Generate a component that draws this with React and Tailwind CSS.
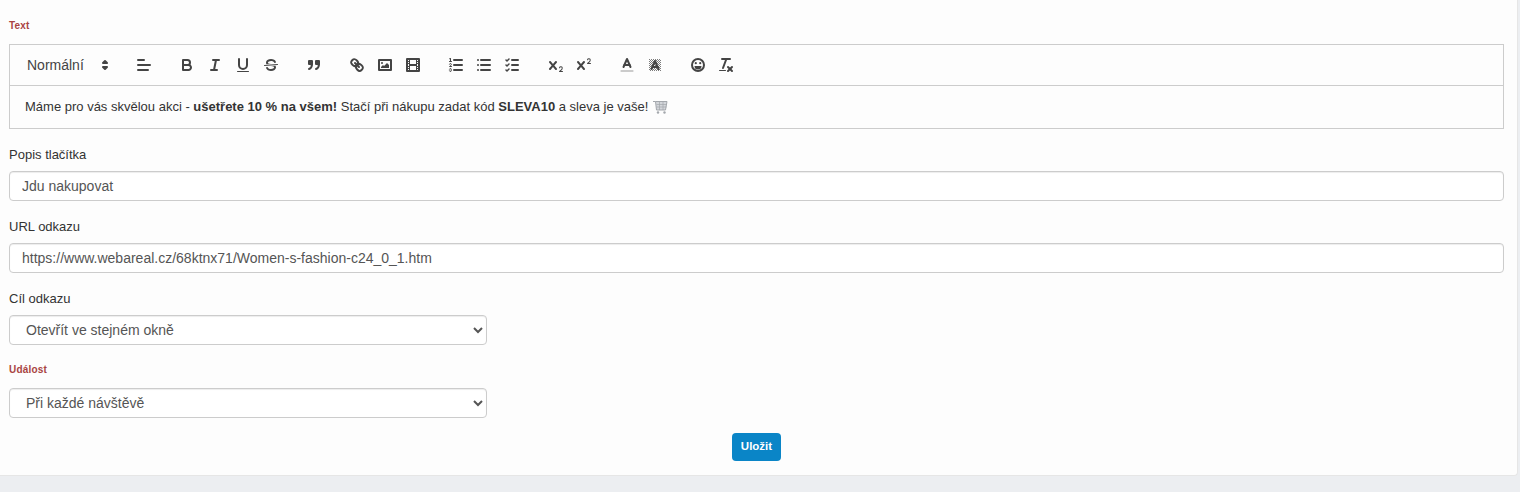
const stroke = { fill: 'none', stroke: '#444', strokeWidth: 2, strokeLinecap: 'round', strokeLinejoin: 'round' };
const thin = { ...stroke, strokeWidth: 1 };
const solid = { fill: '#444' };
const xPath = 'M9.65,5.241a1,1,0,0,0-1.409.108L6,7.964,3.759,5.349A1,1,0,0,0,2.192,6.59178Q2.2,6.6,2.241,6.651L4.684,9.5,2.241,12.35A1,1,0,0,0,3.71,13.70722q0.02-.02.049-0.049L6,11.036,8.241,13.65a1,1,0,1,0,1.567-1.24277Q9.8,12.4,9.759,12.35L7.316,9.5,9.759,6.651A1,1,0,0,0,9.65,5.241Z';

const icons = {
  align: <><line {...stroke} x1="3" x2="15" y1="9" y2="9" /><line {...stroke} x1="3" x2="13" y1="14" y2="14" /><line {...stroke} x1="3" x2="9" y1="4" y2="4" /></>,
  bold: <><path {...stroke} d="M5,4H9.5A2.5,2.5,0,0,1,12,6.5v0A2.5,2.5,0,0,1,9.5,9H5V4Z" /><path {...stroke} d="M5,9h5.5A2.5,2.5,0,0,1,13,11.5v0A2.5,2.5,0,0,1,10.5,14H5V9Z" /></>,
  italic: <><line {...stroke} x1="7" x2="13" y1="4" y2="4" /><line {...stroke} x1="5" x2="11" y1="14" y2="14" /><line {...stroke} x1="8" x2="10" y1="14" y2="4" /></>,
  underline: <><path {...stroke} d="M5,3V9a4.012,4.012,0,0,0,4,4H9a4.012,4.012,0,0,0,4-4V3" /><rect {...solid} height="1" rx="0.5" width="12" x="3" y="15" /></>,
  strike: <><line {...thin} x1="15.5" x2="2.5" y1="8.5" y2="9.5" /><path {...solid} d="M9.007,8C6.542,7.791,6,7.519,6,6.5,6,5.792,7.283,5,9,5c1.571,0,2.765.679,2.969,1.309a1,1,0,0,0,1.9-.617C13.356,4.106,11.354,3,9,3,6.2,3,4,4.538,4,6.5a3.2,3.2,0,0,0,.5,1.843Z" /><path {...solid} d="M8.984,10C11.457,10.208,12,10.479,12,11.5c0,.708-1.283,1.5-3,1.5-1.571,0-2.765-.679-2.969-1.309a1,1,0,1,0-1.9.617C4.644,13.894,6.646,15,9,15c2.8,0,5-1.538,5-3.5a3.2,3.2,0,0,0-.5-1.843Z" /></>,
  quote: <><rect {...stroke} fill="#444" height="3" width="3" x="4" y="5" /><rect {...stroke} fill="#444" height="3" width="3" x="11" y="5" /><path {...stroke} d="M7,8c0,4.031-3,5-3,5" /><path {...stroke} d="M14,8c0,4.031-3,5-3,5" /></>,
  link: <><line {...stroke} x1="7" x2="11" y1="7" y2="11" /><path {...stroke} d="M8.9,4.577a3.476,3.476,0,0,1,.36,4.679A3.476,3.476,0,0,1,4.577,8.9C3.185,7.5,2.035,6.4,4.217,4.217S7.5,3.185,8.9,4.577Z" /><path {...stroke} d="M13.423,9.1a3.476,3.476,0,0,0-4.679-.36,3.476,3.476,0,0,0,.36,4.679c1.392,1.392,2.5,2.542,4.679.36S14.815,10.5,13.423,9.1Z" /></>,
  image: <><rect {...stroke} height="10" width="12" x="3" y="4" /><circle {...solid} cx="6" cy="7" r="1" /><polyline {...solid} points="5 12 5 11 7 9 8 10 11 7 13 9 13 12 5 12" /></>,
  video: <><rect {...stroke} height="12" width="12" x="3" y="3" /><rect {...solid} height="12" width="1" x="5" y="3" /><rect {...solid} height="12" width="1" x="12" y="3" /><rect {...solid} height="2" width="8" x="5" y="8" /><rect {...solid} height="1" width="3" x="3" y="5" /><rect {...solid} height="1" width="3" x="3" y="7" /><rect {...solid} height="1" width="3" x="3" y="10" /><rect {...solid} height="1" width="3" x="3" y="12" /><rect {...solid} height="1" width="3" x="12" y="5" /><rect {...solid} height="1" width="3" x="12" y="7" /><rect {...solid} height="1" width="3" x="12" y="10" /><rect {...solid} height="1" width="3" x="12" y="12" /></>,
  ordered: <><line {...stroke} x1="7" x2="15" y1="4" y2="4" /><line {...stroke} x1="7" x2="15" y1="9" y2="9" /><line {...stroke} x1="7" x2="15" y1="14" y2="14" /><line {...thin} x1="2.5" x2="4.5" y1="5.5" y2="5.5" /><path {...solid} d="M3.5,6A0.5,0.5,0,0,1,3,5.5V3.085l-0.276.138A0.5,0.5,0,0,1,2.053,3c-0.124-.247-0.023-0.324.224-0.447l1-.5A0.5,0.5,0,0,1,4,2.5v3A0.5,0.5,0,0,1,3.5,6Z" /><path {...thin} d="M4.5,10.5h-2c0-.234,1.85-1.076,1.85-2.234A0.959,0.959,0,0,0,2.5,8.156" /><path {...thin} d="M2.5,14.846a0.959,0.959,0,0,0,1.85-.109A0.7,0.7,0,0,0,3.75,14a0.688,0.688,0,0,0,.6-0.736,0.959,0.959,0,0,0-1.85-.109" /></>,
  bullet: <><line {...stroke} x1="6" x2="15" y1="4" y2="4" /><line {...stroke} x1="6" x2="15" y1="9" y2="9" /><line {...stroke} x1="6" x2="15" y1="14" y2="14" /><line {...stroke} x1="3" x2="3" y1="4" y2="4" /><line {...stroke} x1="3" x2="3" y1="9" y2="9" /><line {...stroke} x1="3" x2="3" y1="14" y2="14" /></>,
  check: <><line {...stroke} x1="9" x2="15" y1="4" y2="4" /><polyline {...stroke} strokeWidth="1.5" points="3 4 4 5 6 3" /><line {...stroke} x1="9" x2="15" y1="14" y2="14" /><polyline {...stroke} strokeWidth="1.5" points="3 14 4 15 6 13" /><line {...stroke} x1="9" x2="15" y1="9" y2="9" /><polyline {...stroke} strokeWidth="1.5" points="3 9 4 10 6 8" /></>,
  sub: <><path {...solid} d="M15.5,15H13.861a3.858,3.858,0,0,0,1.914-2.975,1.8,1.8,0,0,0-1.6-1.751A1.921,1.921,0,0,0,12.021,11.7a0.50013,0.50013,0,1,0,.957.291h0a0.914,0.914,0,0,1,1.053-.725,0.81,0.81,0,0,1,.744.762c0,1.076-1.16971,1.86982-1.93971,2.43082A1.45639,1.45639,0,0,0,12,15.5a0.5,0.5,0,0,0,.5.5h3A0.5,0.5,0,0,0,15.5,15Z" /><path {...solid} d={xPath} /></>,
  sup: <><path {...solid} d="M15.5,7H13.861a4.015,4.015,0,0,0,1.914-2.975,1.8,1.8,0,0,0-1.6-1.751A1.922,1.922,0,0,0,12.021,3.7a0.5,0.5,0,1,0,.957.291,0.917,0.917,0,0,1,1.053-.725,0.81,0.81,0,0,1,.744.762c0,1.077-1.164,1.925-1.934,2.486A1.423,1.423,0,0,0,12,7.5a0.5,0.5,0,0,0,.5.5h3A0.5,0.5,0,0,0,15.5,7Z" /><path {...solid} d={xPath} /></>,
  color: <><line {...stroke} stroke="#999" strokeWidth="1" x1="3" x2="15" y1="15" y2="15" /><polyline {...stroke} points="5.5 11 9 3 12.5 11" /><line {...stroke} x1="11.63" x2="6.38" y1="9" y2="9" /></>,
  background: <><defs><pattern id="hatch" width="2" height="2" patternUnits="userSpaceOnUse"><rect width="1" height="1" fill="#444" /><rect x="1" y="1" width="1" height="1" fill="#444" /></pattern></defs><rect fill="url(#hatch)" x="3" y="3" width="12" height="12" opacity="0.7" /><polyline {...stroke} points="5.5 13 9 5 12.5 13" /><line {...stroke} x1="11.63" x2="6.38" y1="11" y2="11" /></>,
  emoji: <><circle {...stroke} cx="9" cy="9" r="6" /><circle {...solid} cx="6.8" cy="7.2" r="1.1" /><circle {...solid} cx="11.2" cy="7.2" r="1.1" /><path {...solid} d="M5.5,10h7a3.5,3.5,0,0,1-7,0Z" /></>,
  clean: <><line {...stroke} x1="5" x2="13" y1="3" y2="3" /><line {...stroke} x1="6" x2="9.35" y1="12" y2="3" /><line {...stroke} x1="11" x2="15" y1="11" y2="15" /><line {...stroke} x1="15" x2="11" y1="11" y2="15" /><rect {...solid} height="1" rx="0.5" width="7" x="2" y="14" /></>,
};

function ToolButton({ name }) {
  return (
    <span className="w-7 h-6 flex items-center justify-center shrink-0">
      <svg viewBox="0 0 18 18" className="w-[18px] h-[18px]">{icons[name]}</svg>
    </span>
  );
}

const groups = [
  ['align'],
  ['bold', 'italic', 'underline', 'strike'],
  ['quote'],
  ['link', 'image', 'video'],
  ['ordered', 'bullet', 'check'],
  ['sub', 'sup'],
  ['color', 'background'],
  ['emoji', 'clean'],
];

function FieldLabel({ children }) {
  return <label className="block text-[13px] leading-[18px] text-[#333]">{children}</label>;
}

function RedLabel({ children }) {
  return <div className="text-[10px] leading-[12px] font-bold tracking-[0.2px] text-[#a94442]">{children}</div>;
}

const inputClass = 'block w-full h-[30px] px-3 rounded border border-[#ccc] bg-white text-[14px] text-[#555] shadow-[inset_0_1px_1px_rgba(0,0,0,0.075)] outline-none';
const selectClass = 'block w-[478px] h-[30px] px-3 rounded border border-[#ccc] bg-white text-[14px] text-[#555] shadow-[inset_0_1px_1px_rgba(0,0,0,0.075)] outline-none';

export default function App() {
  return (
    <div className="h-[492px] bg-[#eceef1] overflow-hidden font-['Liberation_Sans',Arial,sans-serif]">
      <div className="w-[1518px] h-[476px] bg-[#fdfdfd] border-r border-b border-[#e6e6e6] rounded-br pl-[9px] pr-[13px] pt-[20px]">
        <RedLabel>Text</RedLabel>
        <div className="mt-[12px] border border-[#ccc]">
          <div className="flex items-center gap-[15.1px] p-2 border-b border-[#ccc]">
            <div className="w-[97px] h-6 pl-[9px] flex items-center justify-between text-[14px] text-[#444] shrink-0">
              <span>Normální</span>
              <svg viewBox="0 0 18 18" className="w-[18px] h-[18px] mr-px">
                <polygon fill="#444" points="7 11 9 13 11 11 7 11" stroke="#444" strokeWidth="2" strokeLinejoin="round" />
                <polygon fill="#444" points="7 7 9 5 11 7 7 7" stroke="#444" strokeWidth="2" strokeLinejoin="round" />
              </svg>
            </div>
            {groups.map((group) => (
              <div key={group[0]} className="flex">
                {group.map((name) => <ToolButton key={name} name={name} />)}
              </div>
            ))}
          </div>
          <div className="h-[42px] px-[15px] flex items-center text-[13px] text-[#333] whitespace-pre">
            Máme pro vás skvělou akci - <b>ušetřete 10 % na všem!</b> Stačí při nákupu zadat kód <b>SLEVA10</b> a sleva je vaše!{' '}
            <svg viewBox="0 0 16 16" className="w-4 h-4 -mt-px">
              <path d="M1,2.5h2.5l1,8.5h9l1.5-8.5h-11.5" fill="#d3d6da" stroke="#a3a7ac" strokeWidth="1" />
              <path d="M4.5,5.5h10M4.5,8h10M7.5,3v8M11,3v8" stroke="#a3a7ac" strokeWidth="0.7" fill="none" />
              <circle cx="6" cy="13.5" r="1.2" fill="#a3a7ac" />
              <circle cx="12.5" cy="13.5" r="1.2" fill="#a3a7ac" />
            </svg>
          </div>
        </div>
        <div className="mt-[17px]">
          <FieldLabel>Popis tlačítka</FieldLabel>
          <input className={`${inputClass} mt-[7px]`} defaultValue="Jdu nakupovat" />
        </div>
        <div className="mt-[17px]">
          <FieldLabel>URL odkazu</FieldLabel>
          <input className={`${inputClass} mt-[7px]`} defaultValue="https://www.webareal.cz/68ktnx71/Women-s-fashion-c24_0_1.htm" />
        </div>
        <div className="mt-[17px]">
          <FieldLabel>Cíl odkazu</FieldLabel>
          <select className={`${selectClass} mt-[7px]`} defaultValue="same">
            <option value="same">Otevřít ve stejném okně</option>
            <option value="new">Otevřít v novém okně</option>
          </select>
        </div>
        <div className="mt-[19px]">
          <RedLabel>Událost</RedLabel>
          <select className={`${selectClass} mt-[12px]`} defaultValue="each">
            <option value="each">Při každé návštěvě</option>
          </select>
        </div>
        <div className="flex justify-center mt-[15px]">
          <button className="w-[49px] h-7 pb-px rounded bg-[#0a85c7] text-white text-[11.5px] font-bold">Uložit</button>
        </div>
      </div>
    </div>
  );
}
